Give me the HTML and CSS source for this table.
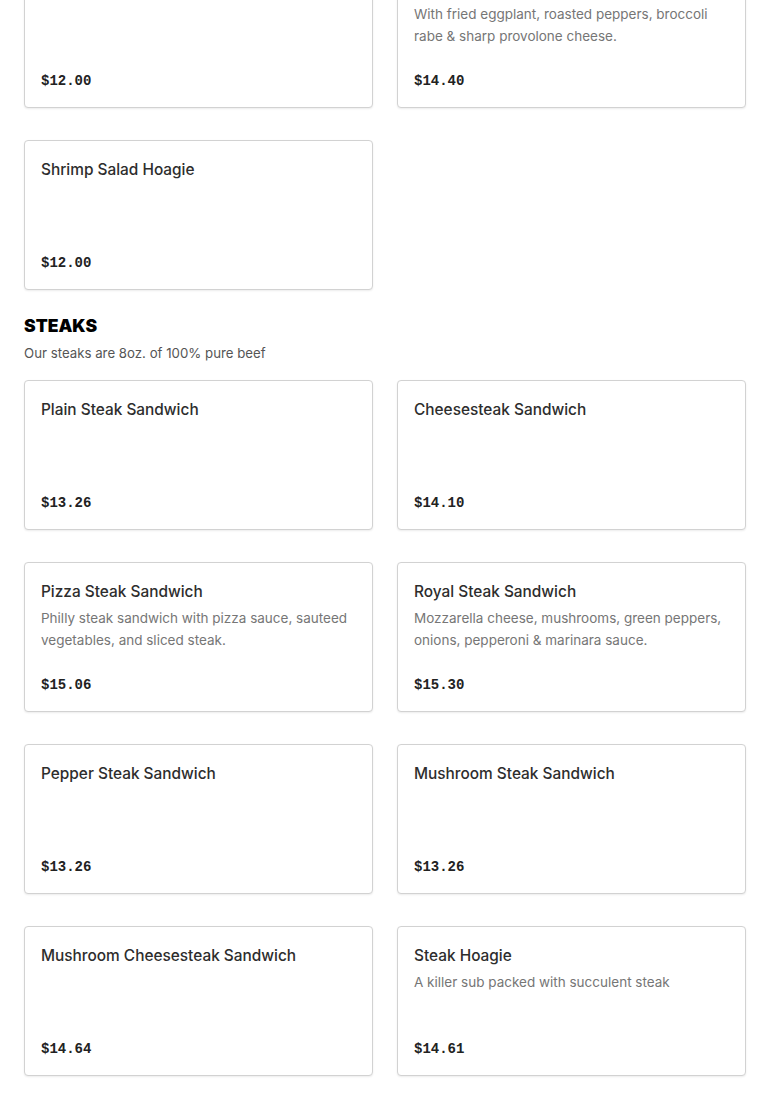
FILE: index.html
```html
<!DOCTYPE html>
<html lang="en">
<head>
<meta charset="utf-8">
<title>Menu</title>
<link rel="stylesheet" href="styles.css">
</head>
<body>
<main class="page">
  <section class="section">
    <div class="grid">
      <article class="card">
        <h3 class="card-title">Italian Hoagie</h3>
        <div class="price">$12.00</div>
      </article>
      <article class="card">
        <h3 class="card-title">Eggplant Hoagie</h3>
        <p class="card-desc">With fried eggplant, roasted peppers, broccoli rabe &amp; sharp provolone cheese.</p>
        <div class="price">$14.40</div>
      </article>
      <article class="card">
        <h3 class="card-title">Shrimp Salad Hoagie</h3>
        <div class="price">$12.00</div>
      </article>
    </div>
  </section>

  <section class="section">
    <h2 class="section-title">STEAKS</h2>
    <p class="section-sub">Our steaks are 8oz. of 100% pure beef</p>
    <div class="grid">
      <article class="card">
        <h3 class="card-title">Plain Steak Sandwich</h3>
        <div class="price">$13.26</div>
      </article>
      <article class="card">
        <h3 class="card-title">Cheesesteak Sandwich</h3>
        <div class="price">$14.10</div>
      </article>
      <article class="card">
        <h3 class="card-title">Pizza Steak Sandwich</h3>
        <p class="card-desc">Philly steak sandwich with pizza sauce, sauteed vegetables, and sliced steak.</p>
        <div class="price">$15.06</div>
      </article>
      <article class="card">
        <h3 class="card-title">Royal Steak Sandwich</h3>
        <p class="card-desc">Mozzarella cheese, mushrooms, green peppers, onions, pepperoni &amp; marinara sauce.</p>
        <div class="price">$15.30</div>
      </article>
      <article class="card">
        <h3 class="card-title">Pepper Steak Sandwich</h3>
        <div class="price">$13.26</div>
      </article>
      <article class="card">
        <h3 class="card-title">Mushroom Steak Sandwich</h3>
        <div class="price">$13.26</div>
      </article>
      <article class="card">
        <h3 class="card-title">Mushroom Cheesesteak Sandwich</h3>
        <div class="price">$14.64</div>
      </article>
      <article class="card">
        <h3 class="card-title">Steak Hoagie</h3>
        <p class="card-desc">A killer sub packed with succulent steak</p>
        <div class="price">$14.61</div>
      </article>
    </div>
  </section>
</main>
</body>
</html>
```

FILE: styles.css
```css
* { box-sizing: border-box; }

html, body {
  margin: 0;
  padding: 0;
  background: #fff;
}

body {
  font-family: "Inter", "Noto Sans", "Liberation Sans", sans-serif;
  color: #2d2d2d;
}

.page {
  padding: 0 24px 40px;
  margin-top: -42px;
}

.section-title {
  margin: 24px 0 0;
  font-size: 17.5px;
  line-height: 24px;
  font-weight: 900;
  color: #000;
}

.section-sub {
  margin: 5px 0 17px;
  font-size: 13.25px;
  line-height: 20px;
  color: #555;
}

.grid {
  display: grid;
  grid-template-columns: 349px 349px;
  column-gap: 24px;
  row-gap: 32px;
}

.card {
  display: flex;
  flex-direction: column;
  min-height: 150px;
  padding: 16px 16px 15px;
  border: 1px solid #d2d2d2;
  border-radius: 4px;
  box-shadow: 0 1px 2px rgba(0, 0, 0, 0.08);
  background: #fff;
}

.card-title {
  margin: 0;
  font-size: 15.4px;
  line-height: 26px;
  font-weight: 500;
  color: #2d2d2d;
}

.card-desc {
  margin: 2px 0 0;
  font-size: 13.5px;
  line-height: 22px;
  color: #767676;
}

.price {
  margin-top: auto;
  font-family: "Liberation Mono", "DejaVu Sans Mono", monospace;
  font-weight: 700;
  font-size: 14px;
  line-height: 22px;
  color: #222;
}
```
